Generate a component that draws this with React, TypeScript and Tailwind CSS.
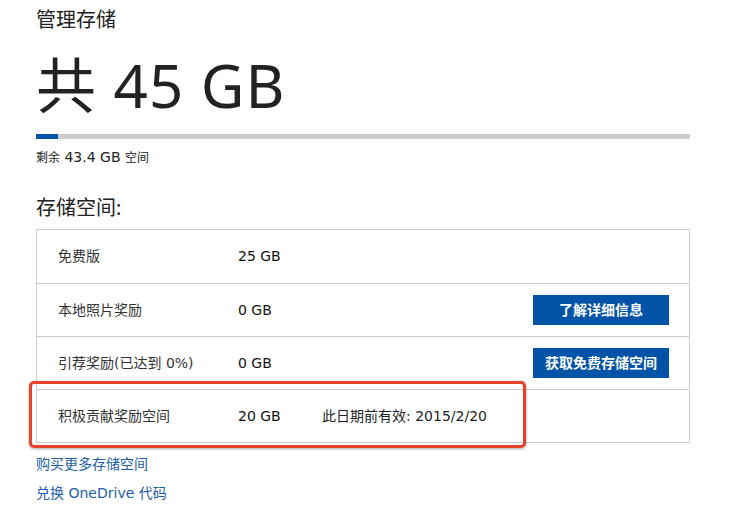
import React from "react";

const rows = [
  { label: "免费版", size: "25 GB" },
  { label: "本地照片奖励", size: "0 GB", button: "了解详细信息" },
  { label: "引荐奖励(已达到 0%)", size: "0 GB", button: "获取免费存储空间" },
  { label: "积极贡献奖励空间", size: "20 GB", note: "此日期前有效: 2015/2/20" },
];

const body = { fontFamily: '"DejaVu Sans", "Noto Sans CJK SC", sans-serif' };

const App = () => {
  return (
    <div
      className="relative w-[735px] h-[517px] bg-white text-[#222] overflow-hidden"
      style={{ fontFamily: '"Noto Sans", "Noto Sans CJK SC", sans-serif' }}
    >
      <div className="pl-[36px] w-[690px]">
        <h1 className="pt-[6px] text-[20px] leading-[28px] font-normal">管理存储</h1>
        <div className="mt-[16px] text-[60px] leading-[70px] tracking-[1px]">共 45 GB</div>

        {/* usage bar */}
        <div className="mt-[14px] h-[5px] bg-[#cccccc]">
          <div className="h-full w-[22px] bg-[#0053a6]" />
        </div>
        <p className="mt-[10px] text-[14px] leading-[16px]" style={body}>
          <span className="text-[12px]">剩余</span> 43.4 GB <span className="text-[12px]">空间</span>
        </p>

        <h2 className="mt-[28px] text-[20px] leading-[28px] font-normal">存储空间:</h2>

        <div className="mt-[7px] border border-[#cccccc]" style={body}>
          {rows.map((row, i) => (
            <div
              key={row.label}
              className={
                "flex items-center h-[53px] pl-[21px] pr-[20px] text-[14px] " +
                (i > 0 ? "border-t border-[#cccccc] h-[53px]" : "h-[52px]")
              }
            >
              <span className="w-[180px] text-[#333]">{row.label}</span>
              <span className="w-[84px] text-[#111]">{row.size}</span>
              {row.note && <span className="text-[#222]">{row.note}</span>}
              {row.button && (
                <button className="ml-auto w-[136px] h-[30px] bg-[#0053a6] text-white text-[14px] font-bold">
                  {row.button}
                </button>
              )}
            </div>
          ))}
        </div>

        <div
          className="mt-[12px] flex flex-col gap-[11px] text-[14px] leading-[18px] text-[#1c5ea8]"
          style={body}
        >
          <a href="#">购买更多存储空间</a>
          <a href="#">兑换 OneDrive 代码</a>
        </div>
      </div>

      {/* highlight annotation */}
      <div className="absolute left-[29px] top-[381px] w-[497px] h-[67px] border-[3px] border-[#e5422b] rounded-[5px] shadow-[0_1px_3px_rgba(0,0,0,0.35)]" />
    </div>
  );
};

export default App;
